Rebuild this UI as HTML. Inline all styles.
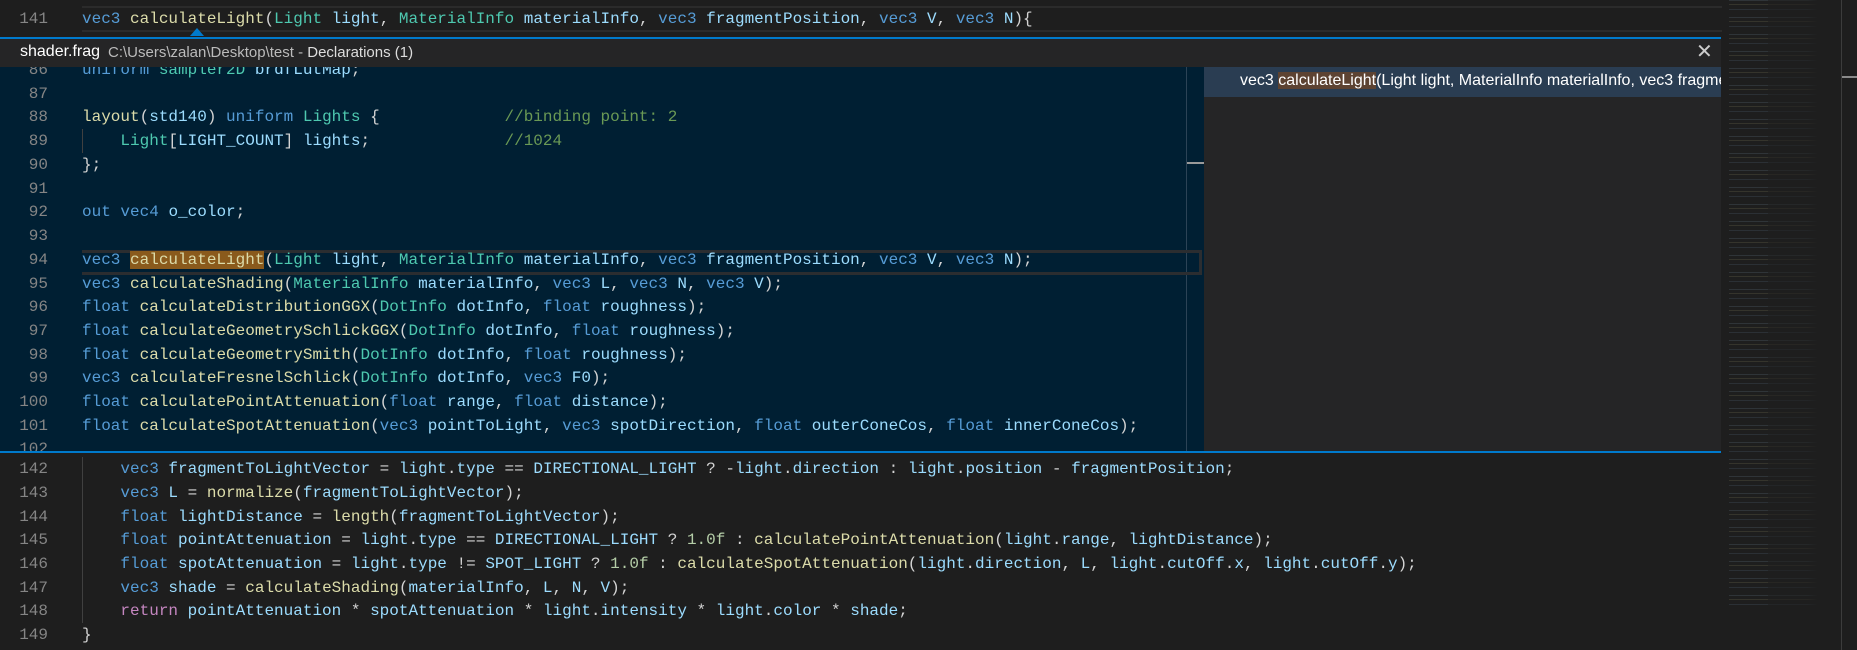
<!DOCTYPE html>
<html><head><meta charset="utf-8"><style>
*{margin:0;padding:0;box-sizing:border-box}
body{width:1857px;height:650px;background:#1e1e1e;position:relative;overflow:hidden;font-family:"Liberation Mono",monospace;font-size:16px;color:#d4d4d4}
.ln{position:absolute;left:0;width:48px;text-align:right;color:#858585;height:24px;line-height:24px;white-space:pre}
.cd{position:absolute;left:82px;height:24px;line-height:24px;white-space:pre}
.k{color:#569cd6}.t{color:#4ec9b0}.f{color:#dcdcaa}.v{color:#9cdcfe}.c{color:#6a9955}.n{color:#b5cea8}.r{color:#c586c0}
#peek{position:absolute;left:0;top:37px;width:1721px;height:416px;border-top:2px solid #007acc;border-bottom:2px solid #007acc}
#title{position:absolute;left:0;top:0;width:100%;height:28px;background:#252526;font-family:"Liberation Sans",sans-serif;z-index:2}
#body{position:absolute;left:0;top:28px;width:1204px;height:384px;background:#001f33;overflow:hidden}
#bi{position:absolute;left:0;top:3px;width:1204px;height:400px}
#res{position:absolute;left:1204px;top:28px;width:517px;height:384px;background:#252526;overflow:hidden}
.ig{position:absolute;width:1px;background:#404040}
</style></head><body>
<!-- top line 141 -->
<div style="position:absolute;left:82px;top:6px;width:1640px;height:26px;border-top:2px solid #2b2b2b;border-bottom:2px solid #2b2b2b"></div>
<div class="ln" style="top:7px">141</div>
<div class="cd" style="top:7px"><span class="k">vec3</span> <span class="f">calculateLight</span>(<span class="t">Light</span> <span class="v">light</span>, <span class="t">MaterialInfo</span> <span class="v">materialInfo</span>, <span class="k">vec3</span> <span class="v">fragmentPosition</span>, <span class="k">vec3</span> <span class="v">V</span>, <span class="k">vec3</span> <span class="v">N</span>){</div>
<div style="position:absolute;left:190px;top:28px;width:0;height:0;border-left:7px solid transparent;border-right:7px solid transparent;border-bottom:8px solid #007acc"></div>

<div id="peek">
 <div id="title"><span style="position:absolute;left:20px;top:4px;font-size:16px;color:#fff">shader.frag</span><span style="position:absolute;left:108px;top:5px;font-size:15px;color:#bbb">C:\Users\zalan\Desktop\test - <span style="color:#ddd">Declarations (1)</span></span>
 <span style="position:absolute;left:1696px;top:0px;font-size:20px;color:#ccc">✕</span></div>
 <div id="body">
  <div style="position:absolute;left:1186px;top:0;width:1px;height:384px;background:#2c4356"></div>
  <div style="position:absolute;left:1187px;top:95px;width:17px;height:2px;background:#9a9a9a"></div>
  <div id="bi">
  <div style="position:absolute;left:82px;top:180px;width:1120px;height:3px;background:#2b2d30"></div>
  <div style="position:absolute;left:82px;top:202px;width:1120px;height:3px;background:#2b2d30"></div>
  <div style="position:absolute;left:1199px;top:180px;width:3px;height:25px;background:#2b2d30"></div>
  <div class="ig" style="left:82px;top:59px;height:24px"></div>
  <div class="ln" style="top:-12px">86</div><div class="cd" style="top:-12px"><span class="k">uniform</span> <span class="t">sampler2D</span> <span class="v">brdfLutMap</span>;</div>
  <div class="ln" style="top:12px">87</div>
  <div class="ln" style="top:35px">88</div><div class="cd" style="top:35px"><span class="f">layout</span>(<span class="v">std140</span>) <span class="k">uniform</span> <span class="t">Lights</span> {             <span class="c">//binding point: 2</span></div>
  <div class="ln" style="top:59px">89</div><div class="cd" style="top:59px">    <span class="t">Light</span>[<span class="v">LIGHT_COUNT</span>] <span class="v">lights</span>;              <span class="c">//1024</span></div>
  <div class="ln" style="top:83px">90</div><div class="cd" style="top:83px">};</div>
  <div class="ln" style="top:107px">91</div>
  <div class="ln" style="top:130px">92</div><div class="cd" style="top:130px"><span class="k">out</span> <span class="k">vec4</span> <span class="v">o_color</span>;</div>
  <div class="ln" style="top:154px">93</div>
  <div class="ln" style="top:178px">94</div><div class="cd" style="top:178px"><span class="k">vec3</span> <span class="f" style="background:#8a5a1c">calculateLight</span>(<span class="t">Light</span> <span class="v">light</span>, <span class="t">MaterialInfo</span> <span class="v">materialInfo</span>, <span class="k">vec3</span> <span class="v">fragmentPosition</span>, <span class="k">vec3</span> <span class="v">V</span>, <span class="k">vec3</span> <span class="v">N</span>);</div>
  <div class="ln" style="top:202px">95</div><div class="cd" style="top:202px"><span class="k">vec3</span> <span class="f">calculateShading</span>(<span class="t">MaterialInfo</span> <span class="v">materialInfo</span>, <span class="k">vec3</span> <span class="v">L</span>, <span class="k">vec3</span> <span class="v">N</span>, <span class="k">vec3</span> <span class="v">V</span>);</div>
  <div class="ln" style="top:225px">96</div><div class="cd" style="top:225px"><span class="k">float</span> <span class="f">calculateDistributionGGX</span>(<span class="t">DotInfo</span> <span class="v">dotInfo</span>, <span class="k">float</span> <span class="v">roughness</span>);</div>
  <div class="ln" style="top:249px">97</div><div class="cd" style="top:249px"><span class="k">float</span> <span class="f">calculateGeometrySchlickGGX</span>(<span class="t">DotInfo</span> <span class="v">dotInfo</span>, <span class="k">float</span> <span class="v">roughness</span>);</div>
  <div class="ln" style="top:273px">98</div><div class="cd" style="top:273px"><span class="k">float</span> <span class="f">calculateGeometrySmith</span>(<span class="t">DotInfo</span> <span class="v">dotInfo</span>, <span class="k">float</span> <span class="v">roughness</span>);</div>
  <div class="ln" style="top:296px">99</div><div class="cd" style="top:296px"><span class="k">vec3</span> <span class="f">calculateFresnelSchlick</span>(<span class="t">DotInfo</span> <span class="v">dotInfo</span>, <span class="k">vec3</span> <span class="v">F0</span>);</div>
  <div class="ln" style="top:320px">100</div><div class="cd" style="top:320px"><span class="k">float</span> <span class="f">calculatePointAttenuation</span>(<span class="k">float</span> <span class="v">range</span>, <span class="k">float</span> <span class="v">distance</span>);</div>
  <div class="ln" style="top:344px">101</div><div class="cd" style="top:344px"><span class="k">float</span> <span class="f">calculateSpotAttenuation</span>(<span class="k">vec3</span> <span class="v">pointToLight</span>, <span class="k">vec3</span> <span class="v">spotDirection</span>, <span class="k">float</span> <span class="v">outerConeCos</span>, <span class="k">float</span> <span class="v">innerConeCos</span>);</div>
  <div class="ln" style="top:367px">102</div>
  </div>
 </div>
 <div id="res">
  <div style="position:absolute;left:0;top:0;width:517px;height:30px;background:#2a3d52"></div>
  <div style="position:absolute;left:36px;top:5px;font-family:'Liberation Sans',sans-serif;font-size:16px;color:#fff;white-space:nowrap">vec3 <span style="background:#5d4332">calculateLight</span>(Light light, MaterialInfo materialInfo, vec3 fragmentPosition, vec3 V, vec3 N)</div>
 </div>
</div>

<!-- bottom lines -->
<div class="ig" style="left:82px;top:457px;height:166px"></div>
<div class="ln" style="top:457px">142</div><div class="cd" style="top:457px">    <span class="k">vec3</span> <span class="v">fragmentToLightVector</span> = <span class="v">light</span>.<span class="v">type</span> == <span class="v">DIRECTIONAL_LIGHT</span> ? -<span class="v">light</span>.<span class="v">direction</span> : <span class="v">light</span>.<span class="v">position</span> - <span class="v">fragmentPosition</span>;</div>
<div class="ln" style="top:481px">143</div><div class="cd" style="top:481px">    <span class="k">vec3</span> <span class="v">L</span> = <span class="f">normalize</span>(<span class="v">fragmentToLightVector</span>);</div>
<div class="ln" style="top:505px">144</div><div class="cd" style="top:505px">    <span class="k">float</span> <span class="v">lightDistance</span> = <span class="f">length</span>(<span class="v">fragmentToLightVector</span>);</div>
<div class="ln" style="top:528px">145</div><div class="cd" style="top:528px">    <span class="k">float</span> <span class="v">pointAttenuation</span> = <span class="v">light</span>.<span class="v">type</span> == <span class="v">DIRECTIONAL_LIGHT</span> ? <span class="n">1.0f</span> : <span class="f">calculatePointAttenuation</span>(<span class="v">light</span>.<span class="v">range</span>, <span class="v">lightDistance</span>);</div>
<div class="ln" style="top:552px">146</div><div class="cd" style="top:552px">    <span class="k">float</span> <span class="v">spotAttenuation</span> = <span class="v">light</span>.<span class="v">type</span> != <span class="v">SPOT_LIGHT</span> ? <span class="n">1.0f</span> : <span class="f">calculateSpotAttenuation</span>(<span class="v">light</span>.<span class="v">direction</span>, <span class="v">L</span>, <span class="v">light</span>.<span class="v">cutOff</span>.<span class="v">x</span>, <span class="v">light</span>.<span class="v">cutOff</span>.<span class="v">y</span>);</div>
<div class="ln" style="top:576px">147</div><div class="cd" style="top:576px">    <span class="k">vec3</span> <span class="v">shade</span> = <span class="f">calculateShading</span>(<span class="v">materialInfo</span>, <span class="v">L</span>, <span class="v">N</span>, <span class="v">V</span>);</div>
<div class="ln" style="top:599px">148</div><div class="cd" style="top:599px">    <span class="r">return</span> <span class="v">pointAttenuation</span> * <span class="v">spotAttenuation</span> * <span class="v">light</span>.<span class="v">intensity</span> * <span class="v">light</span>.<span class="v">color</span> * <span class="v">shade</span>;</div>
<div class="ln" style="top:623px">149</div><div class="cd" style="top:623px">}</div>

<!-- minimap -->
<div style="position:absolute;left:1729px;top:0;width:112px;height:605px;opacity:.55;background:repeating-linear-gradient(180deg,rgba(120,150,170,0.35) 0 1px,transparent 1px 4px,rgba(200,190,130,0.25) 4px 5px,transparent 5px 9px,rgba(110,140,170,0.3) 9px 10px,transparent 10px 17px);-webkit-mask:linear-gradient(90deg,#000 0 35%,rgba(0,0,0,.4) 35% 70%,transparent 80%)"></div>
<div style="position:absolute;left:1841px;top:0;width:1px;height:650px;background:#3c3c3c"></div>
<div style="position:absolute;left:1842px;top:76px;width:15px;height:2px;background:#8a8a8a"></div>
</body></html>
